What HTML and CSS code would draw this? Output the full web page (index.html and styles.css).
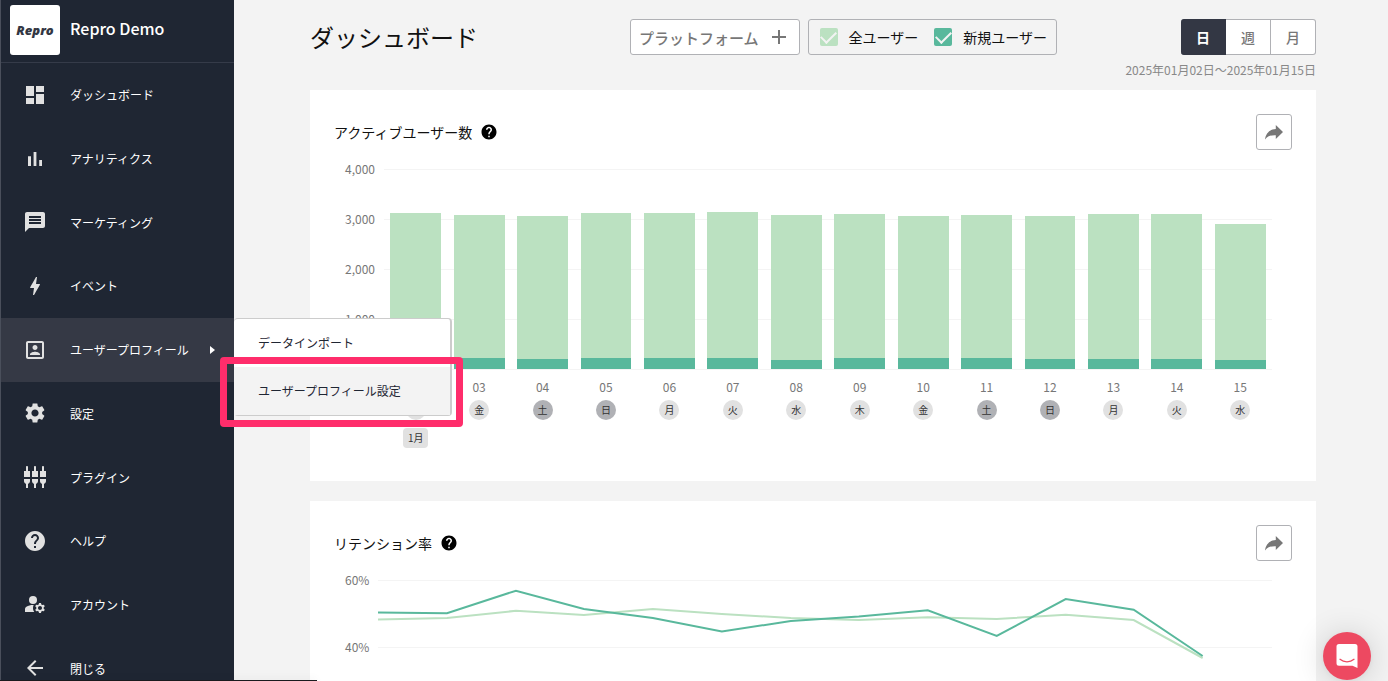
FILE: index.html
```html
<!DOCTYPE html>
<html lang="ja">
<head>
<meta charset="utf-8">
<meta name="viewport" content="width=device-width, initial-scale=1">
<title>ダッシュボード - Repro Demo</title>
<link rel="stylesheet" href="styles.css">
</head>
<body>
<svg class="sprite" aria-hidden="true">
  <symbol id="help" viewBox="0 0 24 24"><path d="M12 2C6.48 2 2 6.48 2 12s4.480 10 10 10 10-4.480 10-10S17.520 2 12 2zm1 17h-2v-2h2v2zm2.070-7.750l-.9.920C13.450 12.900 13 13.500 13 15h-2v-.5c0-1.100.450-2.100 1.170-2.830l1.240-1.260c.370-.360.590-.860.590-1.410 0-1.100-.9-2-2-2s-2 .9-2 2H8c0-2.210 1.790-4 4-4s4 1.790 4 4c0 .880-.360 1.680-.930 2.250z"/></symbol>
  <symbol id="share" viewBox="0 0 18 15"><path d="M10.800 0L18 7l-7.200 7V10.200C6 10 2.800 11 0 14.500C.8 9 4 4.400 10.800 4z"/></symbol>
</svg>

<aside class="sidebar">
  <header class="brand">
    <span class="brand-logo">Repro</span>
    <span class="brand-name">Repro Demo</span>
  </header>
  <nav class="menu">
    <div class="menu-item"><a class="menu-link" href="#"><svg class="icon" viewBox="0 0 24 24"><path d="M3 13h8V3H3v10zm0 8h8v-6H3v6zm10 0h8V11h-8v10zm0-18v6h8V3h-8z"/></svg>ダッシュボード</a></div>
    <div class="menu-item"><a class="menu-link" href="#"><svg class="icon" viewBox="0 0 24 24"><path d="M5 9.200h3V19H5zM10.600 5h2.800v14h-2.800zm5.600 8H19v6h-2.800z"/></svg>アナリティクス</a></div>
    <div class="menu-item"><a class="menu-link" href="#"><svg class="icon" viewBox="0 0 24 24"><path d="M20 2H4c-1.100 0-1.990.9-1.990 2L2 22l4-4h14c1.100 0 2-.9 2-2V4c0-1.100-.9-2-2-2zm-2 12H6v-2h12v2zm0-3H6V9h12v2zm0-3H6V6h12v2z"/></svg>マーケティング</a></div>
    <div class="menu-item"><a class="menu-link" href="#"><svg class="icon" viewBox="0 0 24 24"><path d="M11 21h-1l1-7H7.500c-.58 0-.57-.32-.38-.66.19-.34.05-.08.07-.12C8.480 10.940 10.420 7.540 13 3h1l-1 7h3.500c.49 0 .56.33.47.51l-.07.15C12.960 17.550 11 21 11 21z"/></svg>イベント</a></div>
    <div class="menu-item menu-item-active">
      <a class="menu-link" href="#"><svg class="icon" viewBox="0 0 24 24"><path d="M19 5v14H5V5h14m0-2H5c-1.110 0-2 .9-2 2v14c0 1.100.890 2 2 2h14c1.100 0 2-.9 2-2V5c0-1.100-.9-2-2-2zm-7 9c1.380 0 2.500-1.120 2.500-2.500S13.380 7 12 7 9.500 8.120 9.500 9.500 10.620 12 12 12zm5 5H7v-.75c0-1.660 3.340-2.500 5-2.500s5 .84 5 2.500V17z"/></svg>ユーザープロフィール<span class="caret"></span></a>
      <div class="submenu">
        <a class="submenu-link" href="#">データインポート</a>
        <a class="submenu-link submenu-link-current" href="#">ユーザープロフィール設定</a>
      </div>
    </div>
    <div class="menu-item"><a class="menu-link" href="#"><svg class="icon" viewBox="0 0 24 24"><path d="M19.140 12.940c.04-.3.06-.61.06-.94 0-.32-.02-.64-.07-.94l2.030-1.580c.18-.14.23-.41.12-.61l-1.920-3.320c-.12-.22-.37-.29-.59-.22l-2.390.96c-.5-.38-1.030-.7-1.620-.94L14.400 2.810c-.04-.24-.24-.41-.48-.41h-3.840c-.24 0-.43.17-.47.41L9.250 5.350C8.660 5.590 8.120 5.920 7.630 6.290L5.240 5.330c-.22-.08-.47 0-.59.22L2.740 8.870c-.12.21-.08.47.12.61l2.030 1.580c-.05.3-.09.63-.09.94s.02.64.07.94l-2.030 1.580c-.18.14-.23.41-.12.61l1.920 3.320c.12.22.37.29.59.22l2.390-.96c.5.38 1.030.7 1.620.94l.36 2.540c.05.24.24.41.48.41h3.840c.24 0 .44-.17.47-.41l.36-2.540c.59-.24 1.130-.56 1.620-.94l2.390.96c.22.08.47 0 .59-.22l1.920-3.320c.12-.22.07-.47-.12-.61l-2.010-1.580zM12 15.600c-1.980 0-3.600-1.620-3.600-3.600s1.620-3.600 3.600-3.600 3.600 1.620 3.600 3.600-1.620 3.600-3.600 3.600z"/></svg>設定</a></div>
    <div class="menu-item"><a class="menu-link" href="#"><svg class="icon" viewBox="0 0 24 24"><path d="M5 2c0-.55-.45-1-1-1s-1 .45-1 1v4H1v6h6V6H5V2zm4 14c0 1.300.84 2.400 2 2.820V23h2v-4.180c1.160-.41 2-1.510 2-2.820v-2H9v2zm-8 0c0 1.300.84 2.400 2 2.820V23h2v-4.180C6.160 18.400 7 17.300 7 16v-2H1v2zM21 6V2c0-.55-.45-1-1-1s-1 .45-1 1v4h-2v6h6V6h-2zm-8-4c0-.55-.45-1-1-1s-1 .45-1 1v4H9v6h6V6h-2V2zm4 14c0 1.300.84 2.400 2 2.820V23h2v-4.180c1.160-.41 2-1.510 2-2.820v-2h-6v2z"/></svg>プラグイン</a></div>
    <div class="menu-item"><a class="menu-link" href="#"><svg class="icon"><use href="#help"/></svg>ヘルプ</a></div>
    <div class="menu-item"><a class="menu-link" href="#"><svg class="icon" viewBox="0 0 24 24"><circle cx="10" cy="8" r="4"/><path d="M10.670 13.020c-.22-.01-.44-.02-.67-.02-2.420 0-4.680.67-6.610 1.820-.88.520-1.390 1.500-1.390 2.530V20h9.260c-.79-1.130-1.260-2.510-1.260-4 0-1.070.25-2.070.67-2.980zM20.750 16c0-.22-.03-.42-.06-.63l1.140-1.010-1-1.730-1.450.49c-.32-.27-.68-.48-1.080-.63L18 11h-2l-.3 1.490c-.4.15-.76.36-1.080.63l-1.450-.49-1 1.730 1.140 1.010c-.03.21-.06.41-.06.63s.03.42.06.63l-1.140 1.010 1 1.730 1.450-.49c.32.270.68.480 1.080.63L16 21h2l.3-1.490c.4-.15.76-.36 1.080-.63l1.450.49 1-1.730-1.140-1.010c.03-.21.06-.41.06-.63zM17 18c-1.100 0-2-.9-2-2s.9-2 2-2 2 .9 2 2-.9 2-2 2z"/></svg>アカウント</a></div>
    <div class="menu-item"><a class="menu-link" href="#"><svg class="icon" viewBox="0 0 24 24"><path d="M20 11H7.830l5.590-5.590L12 4l-8 8 8 8 1.410-1.410L7.830 13H20v-2z"/></svg>閉じる</a></div>
  </nav>
</aside>

<main class="main">
  <header class="toolbar">
    <h1 class="title">ダッシュボード</h1>
    <div class="filters">
      <button class="platform" type="button">プラットフォーム<svg class="plus" viewBox="0 0 14 14"><path d="M7 0v14M0 7h14"/></svg></button>
      <div class="segments">
        <label class="check"><input class="check-box check-box-all" type="checkbox" checked>全ユーザー</label>
        <label class="check"><input class="check-box check-box-new" type="checkbox" checked>新規ユーザー</label>
      </div>
    </div>
    <div class="period">
      <div class="period-buttons">
        <button class="period-button period-button-on" type="button">日</button>
        <button class="period-button" type="button">週</button>
        <button class="period-button" type="button">月</button>
      </div>
      <div class="period-range">2025年01月02日〜2025年01月15日</div>
    </div>
  </header>

  <section class="card">
    <header class="card-head">
      <h2 class="card-title">アクティブユーザー数</h2>
      <svg class="hint"><use href="#help"/></svg>
      <button class="share" type="button" aria-label="共有"><svg class="share-icon"><use href="#share"/></svg></button>
    </header>
    <div class="chart">
      <div class="ticks"><span>4,000</span><span>3,000</span><span>2,000</span><span>1,000</span><span>0</span></div>
      <div class="plot bars">
        <div class="bar" style="height:78%"><div class="bar-new" style="height:7%"></div></div>
        <div class="bar" style="height:77%"><div class="bar-new" style="height:7%"></div></div>
        <div class="bar" style="height:76.7%"><div class="bar-new" style="height:6.400%"></div></div>
        <div class="bar" style="height:78.2%"><div class="bar-new" style="height:6.800%"></div></div>
        <div class="bar" style="height:77.900%"><div class="bar-new" style="height:7.300%"></div></div>
        <div class="bar" style="height:78.600%"><div class="bar-new" style="height:7%"></div></div>
        <div class="bar" style="height:76.900%"><div class="bar-new" style="height:6%"></div></div>
        <div class="bar" style="height:77.500%"><div class="bar-new" style="height:6.900%"></div></div>
        <div class="bar" style="height:76.500%"><div class="bar-new" style="height:6.900%"></div></div>
        <div class="bar" style="height:76.900%"><div class="bar-new" style="height:7.200%"></div></div>
        <div class="bar" style="height:76.700%"><div class="bar-new" style="height:6.600%"></div></div>
        <div class="bar" style="height:77.400%"><div class="bar-new" style="height:6.400%"></div></div>
        <div class="bar" style="height:77.300%"><div class="bar-new" style="height:6.700%"></div></div>
        <div class="bar" style="height:72.700%"><div class="bar-new" style="height:6.400%"></div></div>
      </div>
      <div class="days">
        <div class="day">02<span class="dow">木</span><span class="month">1月</span></div>
        <div class="day">03<span class="dow">金</span></div>
        <div class="day">04<span class="dow dow-off">土</span></div>
        <div class="day">05<span class="dow dow-off">日</span></div>
        <div class="day">06<span class="dow">月</span></div>
        <div class="day">07<span class="dow">火</span></div>
        <div class="day">08<span class="dow">水</span></div>
        <div class="day">09<span class="dow">木</span></div>
        <div class="day">10<span class="dow">金</span></div>
        <div class="day">11<span class="dow dow-off">土</span></div>
        <div class="day">12<span class="dow dow-off">日</span></div>
        <div class="day">13<span class="dow">月</span></div>
        <div class="day">14<span class="dow">火</span></div>
        <div class="day">15<span class="dow">水</span></div>
      </div>
    </div>
  </section>

  <section class="card">
    <header class="card-head">
      <h2 class="card-title">リテンション率</h2>
      <svg class="hint"><use href="#help"/></svg>
      <button class="share" type="button" aria-label="共有"><svg class="share-icon"><use href="#share"/></svg></button>
    </header>
    <div class="chart">
      <div class="ticks ticks-rate"><span>60%</span><span>40%</span></div>
      <div class="plot rates">
        <svg class="lines" viewBox="0 0 894 100" preserveAspectRatio="none">
          <polyline class="line line-all" points="0,39.500 69,38 138,30.800 206,35 275,29 344,34 413,38 481,40 550,37.200 619,39 688,34.800 756,40 825,78"/>
          <polyline class="line line-new" points="0,32.600 69,33.300 138,10.700 206,29 275,38 344,51.500 413,41 481,36.600 550,30.200 619,56 688,19 756,29.700 825,76"/>
        </svg>
      </div>
    </div>
  </section>
</main>

<button class="launcher" type="button" aria-label="チャット"><svg class="launcher-icon" viewBox="0 0 22 24"><path d="M3 0h16a2.500 2.500 0 0 1 2.500 2.500V24l-5-2.200H3A2.500 2.500 0 0 1 .5 19.300V2.500A2.500 2.500 0 0 1 3 0z" fill="#fff"/><path d="M4 15.300c4 3.300 10 3.300 14 0" fill="none" stroke="#ed4961" stroke-width="1.300" stroke-linecap="round"/></svg></button>
<div class="status-edge"></div>
</body>
</html>
```
FILE: styles.css
```css
* { box-sizing: border-box; }

body {
  margin: 0;
  height: 100vh;
  overflow: hidden;
  display: flex;
  background: #f3f3f3;
  color: #111;
  font-family: "Noto Sans CJK JP", sans-serif;
  font-size: 12px;
}

button { font-family: inherit; padding: 0; cursor: pointer; }
a { color: inherit; text-decoration: none; }
.sprite { position: absolute; width: 0; height: 0; }

/* Sidebar */
.sidebar {
  position: relative;
  z-index: 2;
  flex: none;
  width: 234px;
  min-height: 700px;
  display: flex;
  flex-direction: column;
  align-self: flex-start;
  background: #1f2633;
  border-left: 1px solid #4a4f5b;
  color: #fff;
}
.brand {
  display: flex;
  align-items: center;
  gap: 10px;
  padding: 5px 9px 7px;
  border-bottom: 1px solid #353b49;
}
.brand-logo {
  width: 50px;
  height: 50px;
  display: grid;
  place-items: center;
  background: #fff;
  border-radius: 3px;
  color: #333744;
  font: italic 800 13px "Open Sans", sans-serif;
}
.brand-name { font-size: 16px; font-weight: 500; line-height: 24px; padding-bottom: 4px; }
.menu { flex: 1; display: flex; flex-direction: column; }
.menu-item { position: relative; flex: 1; display: flex; }
.menu-item-active { background: #353945; }
.menu-link {
  flex: 1;
  display: flex;
  align-items: center;
  padding-left: 22px;
  white-space: nowrap;
}
.icon { flex: none; width: 24px; height: 24px; margin-right: 23px; fill: #e1e1e1; }
.caret {
  margin-left: auto;
  margin-right: 19px;
  border-left: 5px solid #fff;
  border-top: 4px solid transparent;
  border-bottom: 4px solid transparent;
}

/* Fly-out menu of the active entry */
.submenu {
  position: absolute;
  left: 100%;
  top: 0;
  width: 218px;
  background: #fff;
  border: 1px solid #ccc;
  border-left: 0;
  border-right-width: 2px;
  border-radius: 4px;
  color: #1f2633;
}
.submenu-link { display: block; padding: 12px 24px; line-height: 24px; }
.submenu-link-current { position: relative; background: #f3f3f3; }
.submenu-link-current::after {
  content: "";
  position: absolute;
  inset: -10px -13px -12px -14px;
  border: 7px solid #ff2d6b;
  border-radius: 4px;
}

/* Page header */
.main { flex: 1; min-width: 0; padding: 19px 72px 0 76px; }
.toolbar { display: flex; align-items: flex-start; height: 71px; }
.title { flex: 0 0 320px; margin: 0; font-size: 24px; font-weight: 400; line-height: 36px; }
.filters { display: flex; gap: 8px; }
.platform {
  height: 36px;
  display: flex;
  align-items: center;
  gap: 13px;
  padding: 0 13px 0 8px;
  background: #fff;
  border: 1px solid #b0b1b5;
  border-radius: 3px;
  color: #777;
  font-size: 15px;
  font-weight: 500;
}
.plus { width: 14px; height: 14px; stroke: #777; stroke-width: 2; }
.segments {
  height: 36px;
  display: flex;
  align-items: center;
  gap: 16px;
  padding: 0 9px 0 11px;
  border: 1px solid #b0b1b5;
  border-radius: 3px;
}
.check { display: flex; align-items: center; gap: 11px; font-size: 14px; }
.check-box {
  appearance: none;
  width: 18px;
  height: 18px;
  margin: 0;
  display: grid;
  place-items: center;
  border-radius: 2px;
}
.check-box::after {
  content: "";
  width: 13px;
  height: 7px;
  margin-bottom: 4px;
  border: solid #f3f3f3;
  border-width: 0 0 2px 2px;
  transform: rotate(-45deg);
}
.check-box-all { background: #bbe1c1; }
.check-box-new { background: #59b89c; }

.period { margin-left: auto; text-align: right; }
.period-buttons { display: inline-flex; vertical-align: top; }
.period-button {
  width: 45px;
  height: 36px;
  background: #fff;
  border: 1px solid #b0b1b5;
  border-left-width: 0;
  color: #777;
  font-size: 14px;
  font-weight: 500;
}
.period-button:last-child { border-radius: 0 3px 3px 0; }
.period-button-on {
  background: #333744;
  border-color: #333744;
  border-radius: 3px 0 0 3px;
  color: #fff;
  font-weight: 700;
}
.period-range { margin-top: 5px; line-height: 20px; color: #888; }

/* Cards */
.card { margin-bottom: 20px; padding: 24px 24px 33px; background: #fff; }
.card-head { display: flex; align-items: center; gap: 8px; }
.card-title { margin: 0; font-size: 14px; font-weight: 400; }
.hint { width: 18px; height: 18px; }
.share {
  width: 36px;
  height: 36px;
  margin-left: auto;
  display: grid;
  place-items: center;
  background: #fff;
  border: 1px solid #b0b1b5;
  border-radius: 3px;
}
.share-icon { width: 18px; height: 15px; fill: #777; }

/* Charts */
.chart {
  display: grid;
  grid-template-columns: auto 1fr;
  column-gap: 9px;
  margin: 19px 20px 0 11px;
  color: #777;
}
.ticks {
  display: flex;
  flex-direction: column;
  justify-content: space-between;
  margin: -10px 0;
  line-height: 20px;
  text-align: right;
}
.ticks-rate { justify-content: flex-start; gap: 47px; }
.plot {
  height: 200px;
  background: repeating-linear-gradient(#f4f4f4 0 1px, transparent 1px 50px);
}
.bars {
  display: grid;
  grid-template-columns: repeat(14, 1fr);
  align-items: end;
  justify-items: center;
}
.bar {
  width: 80%;
  display: flex;
  align-items: flex-end;
  background: #bbe1c1;
}
.bar-new { width: 100%; background: #59b89c; }
.days {
  grid-column: 2;
  display: grid;
  grid-template-columns: repeat(14, 1fr);
  padding-top: 8px;
  border-top: 1px solid #f4f4f4;
}
.day { display: flex; flex-direction: column; align-items: center; line-height: 18px; }
.dow, .month { background: #e1e1e1; color: #333; font-size: 10px; line-height: 20px; }
.dow { width: 20px; margin-top: 4px; border-radius: 50%; text-align: center; }
.dow-off { background: #b0b1b5; }
.month { margin-top: 8px; padding: 0 5px; border-radius: 4px; }
.rates {
  height: 100px;
  background: repeating-linear-gradient(#f4f4f4 0 1px, transparent 1px 67px);
}
.lines { display: block; width: 100%; height: 100px; }
.line { fill: none; stroke-width: 2; vector-effect: non-scaling-stroke; }
.line-all { stroke: #bbe1c1; }
.line-new { stroke: #59b89c; }

/* Floating elements */
.launcher {
  position: fixed;
  right: 17px;
  bottom: 1px;
  width: 48px;
  height: 48px;
  display: grid;
  place-items: center;
  border: 0;
  border-radius: 50%;
  background: #ed4961;
  box-shadow: 0 1px 6px rgba(0, 0, 0, .06), 0 2px 32px rgba(0, 0, 0, .16);
}
.launcher-icon { width: 22px; height: 24px; }
.status-edge {
  position: fixed;
  z-index: 3;
  left: 0;
  bottom: 0;
  width: 317px;
  height: 1px;
  background: #1a1b1e;
  box-shadow: 0 0 8px rgba(0, 0, 0, .2);
}
```
